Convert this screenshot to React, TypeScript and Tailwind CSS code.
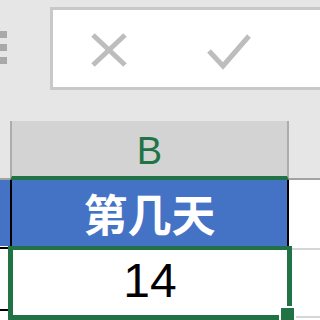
import React from 'react';

/**
 * Zoomed Excel view: formula bar buttons, column B header and two cells
 */
export default function App() {
  return (
    <div className="relative w-[320px] h-[320px] overflow-hidden bg-white font-['Liberation_Sans',sans-serif]">
      {/* Toolbar / formula bar */}
      <div className="flex h-[121px] bg-[#e6e6e6]">
        <div className="mt-[31px] flex w-[7px] flex-col gap-[6px]">
          <div className="h-[7px] w-[7px] bg-[#a9a9a9]" />
          <div className="h-[7px] w-[7px] bg-[#a9a9a9]" />
          <div className="h-[7px] w-[7px] bg-[#a9a9a9]" />
        </div>
        <div className="ml-[43px] mt-[7px] flex h-[83px] flex-1 items-start border-[3px] border-r-0 border-[#c8c8c8] bg-white">
          {/* cancel */}
          <svg className="ml-[37px] mt-[22px]" width="38" height="36" viewBox="0 0 38 36">
            <path d="M3 3 L35 33 M35 3 L3 33" stroke="#bdbdbd" strokeWidth="5" fill="none" />
          </svg>
          {/* enter */}
          <svg className="ml-[78px] mt-[22px]" width="46" height="38" viewBox="0 0 46 38">
            <polyline points="3,19 17,34 43,4" stroke="#bdbdbd" strokeWidth="5" fill="none" />
          </svg>
        </div>
      </div>

      {/* Column header row */}
      <div className="flex h-[59px]">
        <div className="w-[10px] border-b-2 border-[#a3a3a3] bg-[#e6e6e6]" />
        <div className="flex w-[279px] items-center justify-center border-x-2 border-b-4 border-x-[#acacac] border-b-[#217346] bg-[#d3d3d3] pt-[5px] text-[38px] leading-none text-[#217346]">
          B
        </div>
        <div className="flex-1 border-b-2 border-[#a3a3a3] bg-[#e6e6e6]" />
      </div>

      {/* Row 1 */}
      <div className="flex h-[66px]">
        <div className="w-[10px] bg-[#4472c4]" />
        <div className="w-[2px] bg-black" />
        <div className="flex w-[275px] items-center justify-center bg-[#4472c4] pb-[1px] font-['Noto_Sans_CJK_SC',sans-serif] text-[44px] font-bold leading-none text-white">
          第几天
        </div>
        <div className="w-[2px] bg-black" />
        <div className="flex-1 bg-white" />
      </div>

      {/* Row 2 */}
      <div className="flex h-[74px]">
        <div className="flex w-[8px] flex-col">
          <div className="mt-[1px] h-[2px] bg-black" />
          <div className="mt-[60px] h-[2px] bg-black" />
        </div>
        <div className="flex w-[284px] items-center justify-center border-[5px] border-t-4 border-[#217346] bg-white pb-[4px] text-[48px] leading-none text-black">
          14
        </div>
        <div className="flex flex-1 flex-col">
          <div className="mt-[2px] h-[2px] bg-[#d6d6d6]" />
          <div className="mt-[66px] h-[2px] bg-[#d6d6d6]" />
        </div>
      </div>

      {/* Fill handle */}
      <div className="absolute left-[279px] top-[306px] h-[17px] w-[17px] border-2 border-white bg-[#217346]" />
    </div>
  );
}
